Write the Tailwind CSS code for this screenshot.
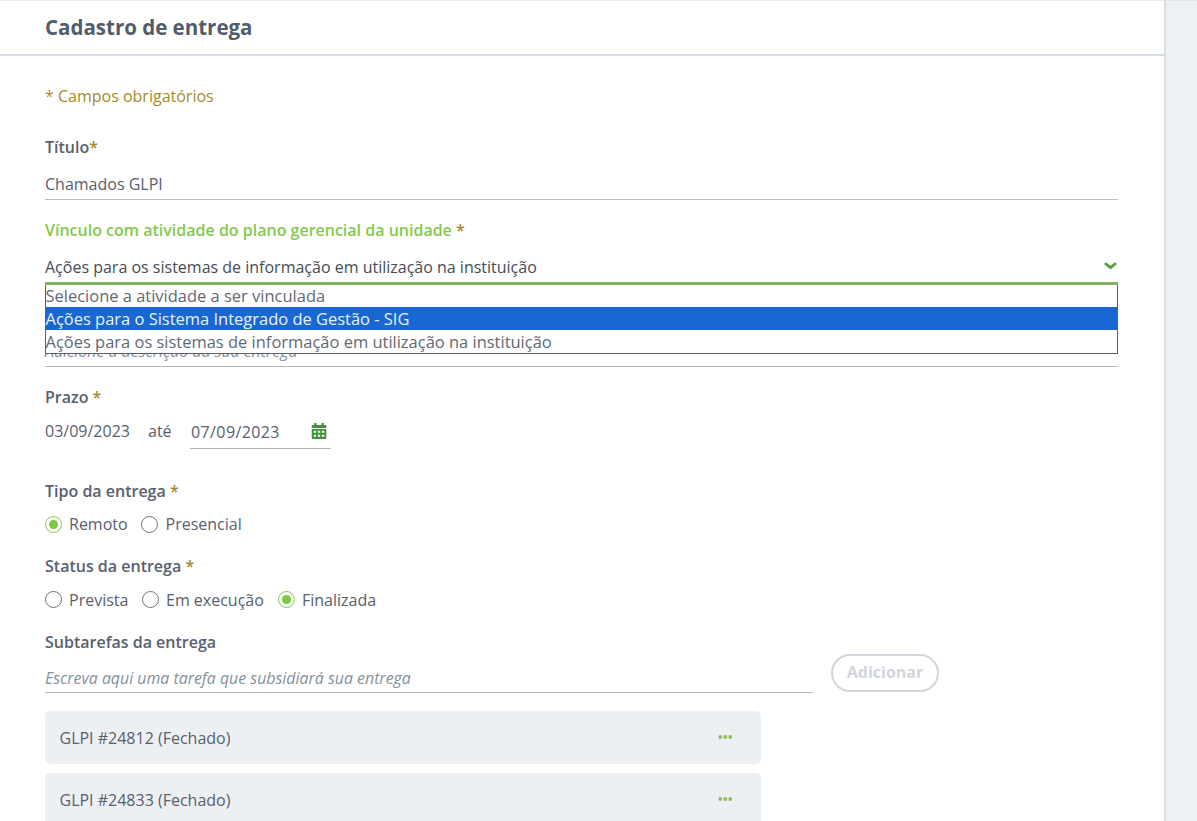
<!DOCTYPE html>
<html lang="pt-BR">
<head>
<meta charset="utf-8">
<title>Cadastro de entrega</title>
<script src="https://cdn.jsdelivr.net/npm/@tailwindcss/browser@4"></script>
</head>
<body class="flex h-[821px] overflow-hidden bg-[#ecf1f5] font-['Open_Sans',sans-serif] text-base leading-6 text-[#58606e]">
<div class="h-[821px] w-[1166px] overflow-hidden border-t border-r-2 border-t-[#e9ebec] border-r-[#d8dfe4] bg-white">
  <header class="flex h-[55px] items-center border-b-2 border-[#d6dce1] pb-[2px] pl-[45px]">
    <h1 class="text-[20.5px] font-bold text-[#525c6b]">Cadastro de entrega</h1>
  </header>
  <main class="flex flex-col pt-7 pr-[46px] pl-[45px]">
    <p class="text-[#a58b28]">* Campos obrigatórios</p>

    <label class="mt-[27px] h-6 font-semibold">Título<span class="text-[#a58b28]">*</span></label>
    <div class="mt-[13px] h-[28px] border-b border-[#b9bcc0]">Chamados GLPI</div>

    <label class="mt-[18px] h-6 font-semibold text-[#83c94b]">Vínculo com atividade do plano gerencial da unidade <span class="text-[#a58b28]">*</span></label>
    <div class="relative mt-[13px] flex h-[30px] justify-between border-b-3 border-[#83b264] text-[#454c57]">
      <span>Ações para os sistemas de informação em utilização na instituição</span>
      <svg class="mt-[7px] mr-[1px] h-[8px] w-[13px]" viewBox="0 0 13 8" fill="none" stroke="#58a044" stroke-width="2.8" stroke-linecap="round" stroke-linejoin="round"><path d="M1.9 1.900 6.500 5.700 11.100 1.900"/></svg>
      <ul class="absolute inset-x-0 top-[30px] z-10 h-[69px] border-x border-b border-[#5b5e63] bg-white text-[16.480px] leading-[23px] text-[#626874]">
        <li class="-ml-px h-[22px] pl-[0.500px] leading-[21px]">Selecione a atividade a ser vinculada</li>
        <li class="h-[23px] bg-[#1967d2] text-[#e8f1fc]"><span class="-ml-[0.500px]">Ações para o Sistema Integrado de Gestão - SIG</span></li>
        <li class="h-[23px]"><span class="-ml-[0.500px]">Ações para os sistemas de informação em utilização na instituição</span></li>
      </ul>
    </div>

    <div class="mt-[54px] h-[28px] border-b border-[#b4babd] text-[15.900px] text-[#85909c] italic">Adicione a descrição da sua entrega</div>

    <label class="mt-[18px] h-6 font-semibold">Prazo <span class="text-[#a58b28]">*</span></label>
    <div class="mt-[10px] flex h-[30px]">
      <span class="w-[103px]">03/09/2023</span>
      <span class="w-[42px]">até</span>
      <div class="flex h-[30px] w-[141px] justify-between border-b border-[#b0b2b4] pt-px pr-[4px] pl-[1px]">
        <span class="tracking-[0.400px]">07/09/2023</span>
        <svg class="mt-[3px] h-[16px] w-[16px]" viewBox="0 0 16 16" fill="#44903a"><path d="M3.200 0h2.300v2h5V0h2.300v2H14a1.300 1.300 0 0 1 1.300 1.300V5H.7V3.300A1.300 1.300 0 0 1 2 2h1.200z"/><path fill-rule="evenodd" d="M.7 6h14.600v8.700a1.300 1.300 0 0 1-1.300 1.300H2a1.300 1.300 0 0 1-1.300-1.300zM2.700 7.700v2h2.400v-2zM6.800 7.700v2h2.400v-2zM10.900 7.700v2h2.400v-2zM2.700 11.800v2h2.400v-2zM6.800 11.800v2h2.400v-2zM10.900 11.800v2h2.400v-2z"/></svg>
      </div>
    </div>

    <label class="mt-[30px] h-6 font-semibold">Tipo da entrega <span class="text-[#a58b28]">*</span></label>
    <div class="mt-[9px] flex h-6 items-center">
      <span class="flex w-[96px] items-center gap-[7px]"><i class="flex size-[17px] items-center justify-center rounded-full border border-[#83c94b]"><i class="size-[9px] rounded-full bg-[#7ac943]"></i></i>Remoto</span>
      <span class="flex items-center gap-[7.500px]"><i class="size-[17px] rounded-full border border-[#6e7279]"></i>Presencial</span>
    </div>

    <label class="mt-[18px] h-6 font-semibold">Status da entrega <span class="text-[#a58b28]">*</span></label>
    <div class="mt-[10px] flex h-6 items-center">
      <span class="flex w-[97px] items-center gap-[7px]"><i class="mb-[2px] size-[17px] rounded-full border border-[#6e7279]"></i>Prevista</span>
      <span class="flex w-[136px] items-center gap-[7px]"><i class="mb-[2px] size-[17px] rounded-full border border-[#6e7279]"></i>Em execução</span>
      <span class="flex items-center gap-[7px]"><i class="mb-[2px] flex size-[17px] items-center justify-center rounded-full border border-[#83c94b]"><i class="size-[9px] rounded-full bg-[#7ac943]"></i></i>Finalizada</span>
    </div>

    <label class="mt-[18px] h-6 font-semibold">Subtarefas da entrega</label>
    <div class="flex h-[57px] items-start">
      <div class="mt-[12px] h-[27px] w-[768px] border-b border-[#b0b2b4] text-[15.900px] text-[#85909c] italic">Escreva aqui uma tarefa que subsidiará sua entrega</div>
      <button class="ml-[18px] flex h-[38px] w-[108px] items-center justify-center rounded-full border-2 border-[#d0d6db] pb-[2px] font-bold text-[#d0d6db]">Adicionar</button>
    </div>

    <div class="flex w-[716px] flex-col gap-[9px]">
      <div class="flex h-[53px] shrink-0 items-center justify-between rounded-[5px] bg-[#ecf0f3] pr-[28px] pl-[14.500px]"><span>GLPI #24812 (Fechado)</span>
        <svg class="mb-[2px] h-[4px] w-[15px]" viewBox="0 0 15 4" fill="#8cc152"><circle cx="2.300" cy="2" r="1.900"/><circle cx="7.300" cy="2" r="1.900"/><circle cx="12.300" cy="2" r="1.900"/></svg></div>
      <div class="flex h-[53px] shrink-0 items-center justify-between rounded-[5px] bg-[#ecf0f3] pr-[28px] pl-[14.500px]"><span>GLPI #24833 (Fechado)</span>
        <svg class="mb-[2px] h-[4px] w-[15px]" viewBox="0 0 15 4" fill="#8cc152"><circle cx="2.300" cy="2" r="1.900"/><circle cx="7.300" cy="2" r="1.900"/><circle cx="12.300" cy="2" r="1.900"/></svg></div>
    </div>
  </main>
</div>
<aside class="h-[821px] flex-1 border-t border-[#dfe3e6]"></aside>
</body>
</html>
